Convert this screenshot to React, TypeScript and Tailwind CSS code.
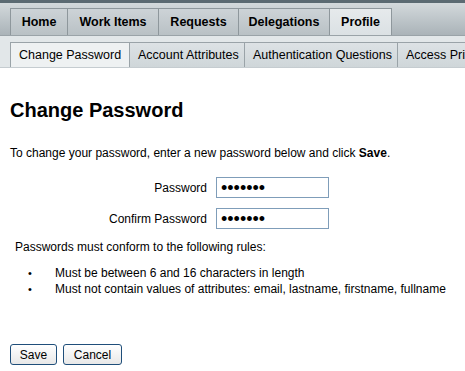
export default function App() {
  const tabs = [
    { t: "Home", w: "w-[58px]" },
    { t: "Work Items", w: "w-[91px]" },
    { t: "Requests", w: "w-[80px]" },
    { t: "Delegations", w: "w-[91px]" },
    { t: "Profile", w: "w-[62px]" },
  ];
  const subTabs = [
    { t: "Change Password", w: "w-[120px]" },
    { t: "Account Attributes", w: "w-[115px]" },
    { t: "Authentication Questions", w: "w-[153px]" },
    { t: "Access Privileges", w: "w-[120px]" },
  ];
  const rules = [
    "Must be between 6 and 16 characters in length",
    "Must not contain values of attributes: email, lastname, firstname, fullname",
  ];

  return (
    <div className="w-[465px] h-[371px] overflow-hidden bg-white text-[12px] text-black" style={{ fontFamily: '"Liberation Sans", Arial, sans-serif' }}>
      {/* top nav */}
      <div className="h-[3px] bg-[#5b6a72]" />
      <div className="h-[33px] bg-gradient-to-b from-[#d3d9dc] to-[#aab3b8] pl-[10px] pt-[5px] flex items-end border-b border-[#9aa3a8]">
        <div className="flex h-[27px]">
          {tabs.map(({ t, w }, i) => (
            <div
              key={t}
              className={`${w} shrink-0 h-full flex items-center justify-center font-bold text-[12.5px] border-t border-[#8e979c] border-r ${
                i === 0 ? "border-l" : ""
              } ${
                t === "Profile"
                  ? "bg-gradient-to-b from-[#e6eaec] to-[#dbe1e4]"
                  : "bg-gradient-to-b from-[#cdd3d7] to-[#b9c1c5]"
              }`}
            >
              {t}
            </div>
          ))}
        </div>
      </div>
      {/* sub nav */}
      <div className="h-[32px] bg-[#e2e7e9] pl-[10px] pt-[6px] flex border-b border-[#c5ccd0]">
        {subTabs.map(({ t, w }, i) => (
          <div
            key={t}
            className={`${w} shrink-0 h-full flex items-center pl-[8px] whitespace-nowrap overflow-hidden text-[12.5px] border-t border-r border-[#9aa3a8] ${
              i === 0 ? "border-l bg-[#eef1f2]" : "bg-gradient-to-b from-[#dde2e5] to-[#cfd6d9]"
            }`}
          >
            {t}
          </div>
        ))}
      </div>

      <div className="px-[10px]">
        <h1 className="text-[20px] font-bold mt-[30px] leading-[24px]">Change Password</h1>
        <p className="mt-[24px] leading-[15px]">
          To change your password, enter a new password below and click <b>Save</b>.
        </p>

        <div className="mt-[16px] flex flex-col gap-[10px]">
          {["Password", "Confirm Password"].map((label) => (
            <div key={label} className="flex items-center">
              <div className="w-[206px] text-right pr-[9px]">{label}</div>
              <div className="w-[113px] h-[21px] border border-[#7f9db9] flex items-center pl-[4px] text-[18px] leading-none">
                •••••••
              </div>
            </div>
          ))}
        </div>

        <p className="mt-[11px] ml-[5px] leading-[15px]">Passwords must conform to the following rules:</p>
        <ul className="mt-[10px] leading-[16px]">
          {rules.map((r) => (
            <li key={r} className="flex">
              <span className="w-[45px] pl-[18px] text-[11px]">•</span>
              <span>{r}</span>
            </li>
          ))}
        </ul>

        <div className="mt-[47px] flex gap-[6px]">
          <button className="h-[21px] w-[47px] border border-[#1f4e7a] rounded-[3px] bg-gradient-to-b from-white to-[#e8e8e8] text-[12px]">
            Save
          </button>
          <button className="h-[21px] w-[59px] border border-[#1f4e7a] rounded-[3px] bg-gradient-to-b from-white to-[#e8e8e8] text-[12px]">
            Cancel
          </button>
        </div>
      </div>
    </div>
  );
}
